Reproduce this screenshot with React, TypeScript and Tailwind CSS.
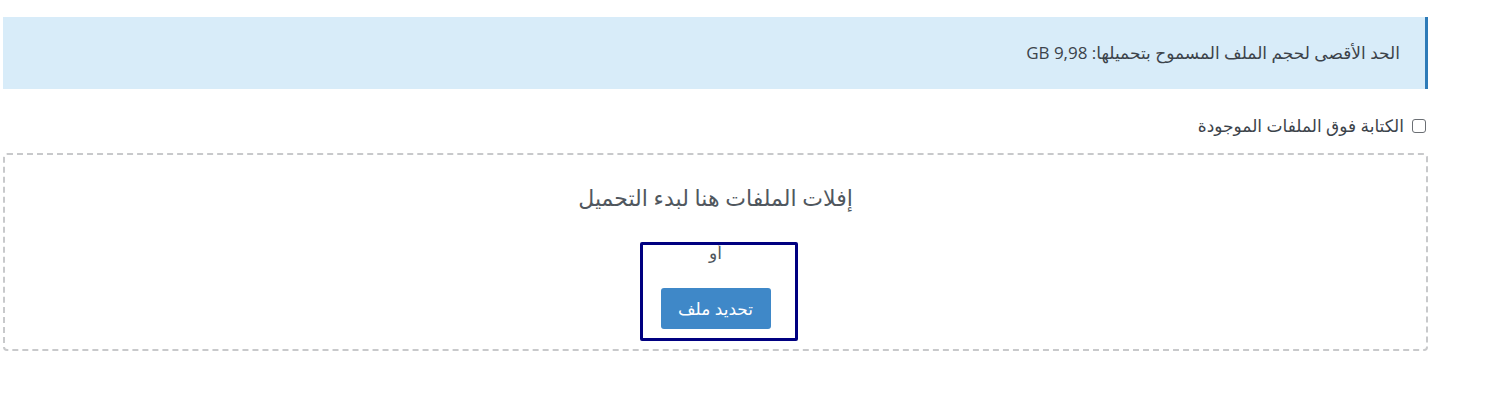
import React from "react";

const font = { fontFamily: '"Open Sans", "DejaVu Sans", sans-serif' };

const App: React.FC = () => {
    return (
        <div dir="rtl" className="w-[1499px] h-[416px] bg-white pt-[17px] pr-[71px] pl-[3px]" style={font}>
            {/* تنبيه الحجم الأقصى */}
            <div className="h-[72px] bg-[#d8ecf9] border-r-[3px] border-[#2e7bb8] flex items-center pr-[25px]">
                <p className="text-[17px] text-[#3c434a]">الحد الأقصى لحجم الملف المسموح بتحميلها: 9,98 GB</p>
            </div>

            <label className="flex items-center gap-[8px] mt-[29px] h-[16px] pr-[2px] text-[17px] text-[#3c434a]">
                <span className="w-[14px] h-[14px] border border-[#6b6f74] rounded-[3px] bg-white" />
                <span>الكتابة فوق الملفات الموجودة</span>
            </label>

            <div className="mt-[19px] h-[198px] border-2 border-dashed border-[#c8c9cb] rounded-[4px] flex flex-col items-center">
                <p className="mt-[26px] text-[22px] text-[#50575e]">إفلات الملفات هنا لبدء التحميل</p>
                <div className="relative flex flex-col items-center">
                    <p className="mt-[24px] text-[17px] text-[#50575e] leading-[30px]">أو</p>
                    <button className="mt-[20px] w-[110px] h-[41px] bg-[#3f88c8] text-white text-[17px] rounded-[3px]">
                        تحديد ملف
                    </button>
                    <div className="absolute top-[28px] left-[-21px] w-[158px] h-[99px] border-[3px] border-[#000080] rounded-[2px]" />
                </div>
            </div>
        </div>
    );
};

export default App;
